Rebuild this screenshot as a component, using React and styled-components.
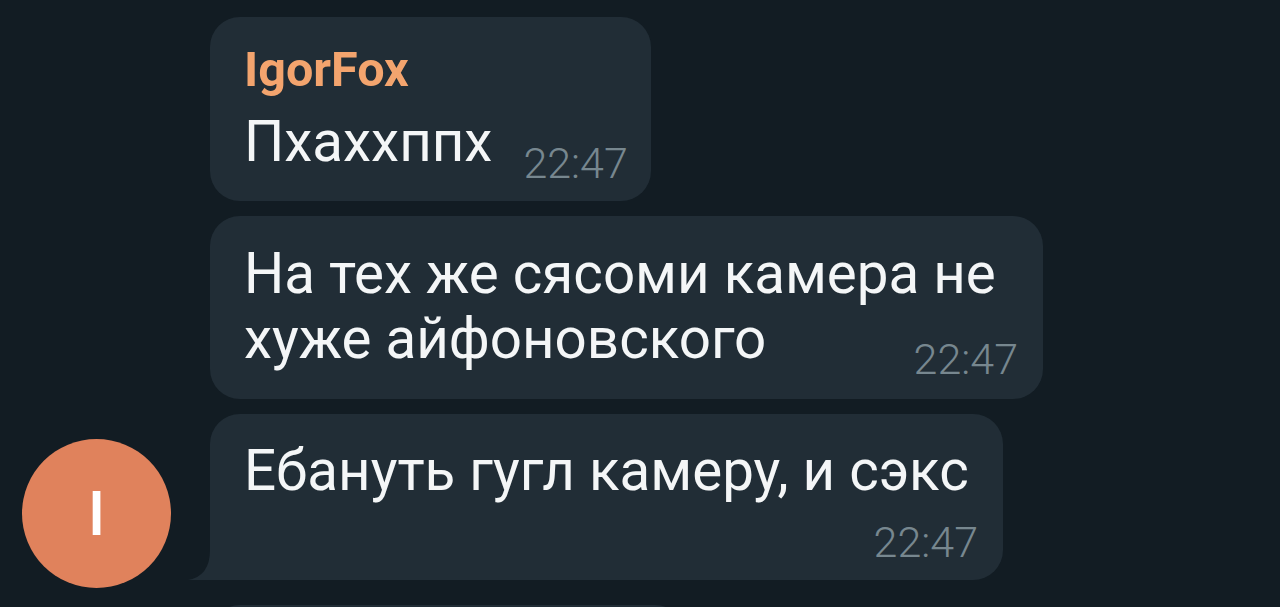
import React from "react";
import styled, { createGlobalStyle } from "styled-components";

const GlobalStyle = createGlobalStyle`
  html, body {
    margin: 0;
    padding: 0;
    background: #121c23;
  }
  body {
    font-family: Roboto, "Liberation Sans", sans-serif;
    overflow: hidden;
  }
`;

const Screen = styled.div`
  width: 1280px;
  height: 607px;
  overflow: hidden;
  background: #121c23;
  padding: 17px 0 0 22px;
  box-sizing: border-box;
  display: flex;
  flex-direction: column;
  gap: 25px;
`;

const Group = styled.div`
  display: flex;
  flex-direction: row;
  align-items: flex-end;
`;

const AvatarSlot = styled.div`
  width: 149px;
  flex-shrink: 0;
  display: flex;
  align-self: stretch;
  align-items: flex-end;
`;

const Avatar = styled.div`
  width: 149px;
  height: 149px;
  border-radius: 50%;
  background: #e0825c;
  color: #ffffff;
  display: flex;
  align-items: center;
  justify-content: center;
  font-size: 62px;
  font-weight: 500;
  margin-bottom: -8px;
`;

const Column = styled.div`
  display: flex;
  flex-direction: column;
  align-items: flex-start;
  gap: 15px;
  margin-left: 39px;
`;

const Bubble = styled.div`
  position: relative;
  background: #212d36;
  border-radius: ${(props) => (props.tail ? "30px 30px 30px 0" : "30px")};
  padding: ${(props) => props.pad};
  display: flex;
  flex-direction: ${(props) => (props.inline ? "row" : "column")};
  align-items: ${(props) => (props.inline ? "flex-end" : "stretch")};
  box-sizing: border-box;
  width: ${(props) => props.width || "auto"};
  height: ${(props) => props.height || "auto"};
`;

const Tail = styled.svg`
  position: absolute;
  left: -22px;
  bottom: 0;
  width: 22px;
  height: 30px;
`;

const Body = styled.div`
  display: flex;
  flex-direction: column;
`;

const Name = styled.div`
  color: #f3a46e;
  font-size: 48.5px;
  font-weight: 700;
  line-height: 56px;
  margin-bottom: 12px;
`;

const Text = styled.div`
  color: #f4f6f7;
  font-size: 56.5px;
  line-height: 65px;
  white-space: nowrap;
`;

const Time = styled.div`
  color: #77878f;
  font-size: 43px;
  font-weight: 300;
  line-height: 48px;
  white-space: nowrap;
  align-self: flex-end;
  margin: ${(props) => props.margin || "0"};
`;

const TailShape = () => (
  <Tail viewBox="0 0 22 30">
    <path d="M22 0 Q22 26 0 30 L22 30 Z" fill="#212d36" />
  </Tail>
);

export default function App() {
  return (
    <>
      <GlobalStyle />
      <Screen>
        <Group>
          <AvatarSlot>
            <Avatar>I</Avatar>
          </AvatarSlot>
          <Column>
            <Bubble inline pad="25px 23px 26px 34px">
              <Body>
                <Name>IgorFox</Name>
                <Text>Пхаххппх</Text>
              </Body>
              <Time margin="0 0 -12px 31px">22:47</Time>
            </Bubble>
            <Bubble pad="26px 25px 16px 34px" width="833px">
              <Text>
                На тех же сясоми камера не
                <br />
                хуже айфоновского
              </Text>
              <Time margin="-37px 0 0 0">22:47</Time>
            </Bubble>
            <Bubble tail pad="25px 25px 14px 34px" width="793px">
              <Text>Ебануть гугл камеру, и сэкс</Text>
              <Time margin="14px 0 0 0">22:47</Time>
              <TailShape />
            </Bubble>
          </Column>
        </Group>
        <Group>
          <AvatarSlot />
          <Column>
            <Bubble pad="0" width="475px" height="120px" />
          </Column>
        </Group>
      </Screen>
    </>
  );
}
